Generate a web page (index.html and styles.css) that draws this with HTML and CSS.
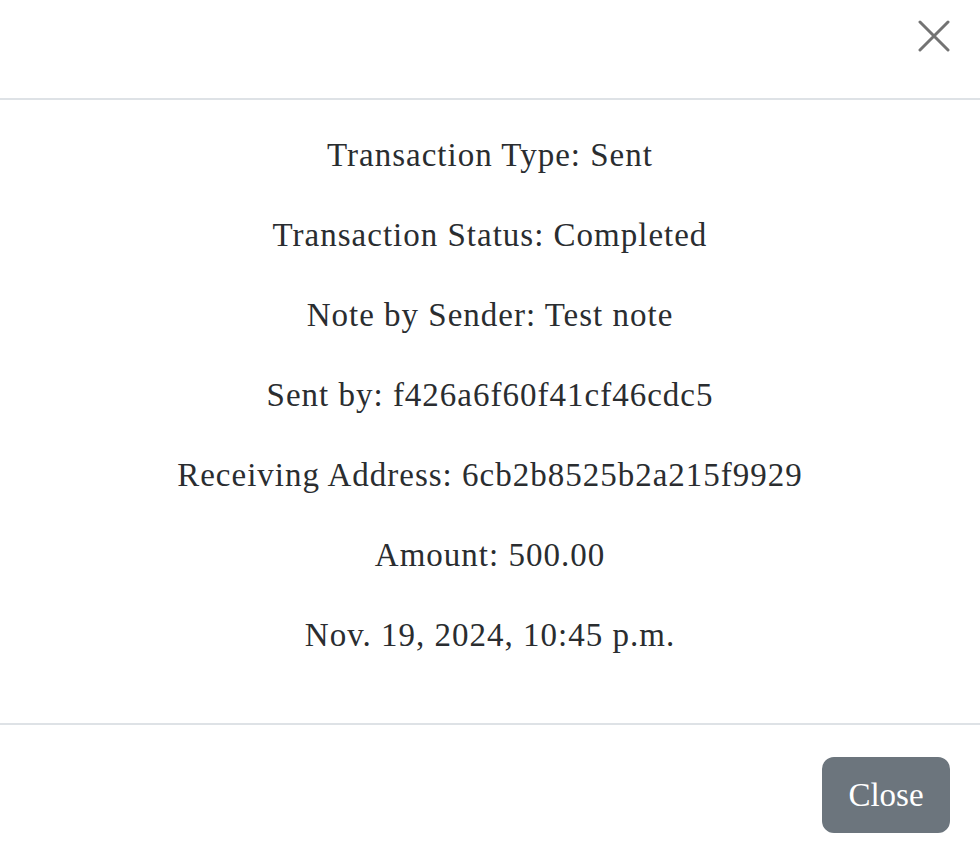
FILE: index.html
```html
<!DOCTYPE html>
<html lang="en">
<head>
<meta charset="utf-8">
<title>Transaction</title>
<link rel="stylesheet" href="styles.css">
</head>
<body>
<div class="modal">
  <div class="modal-header">
    <button class="btn-close" aria-label="Close">
      <svg width="32" height="32" viewBox="0 0 32 32"><path d="M2 2 L30 30 M30 2 L2 30" stroke="#737373" stroke-width="3" stroke-linecap="round" fill="none"/></svg>
    </button>
  </div>
  <div class="modal-body">
    <p>Transaction Type: Sent</p>
    <p>Transaction Status: Completed</p>
    <p>Note by Sender: Test note</p>
    <p>Sent by: f426a6f60f41cf46cdc5</p>
    <p>Receiving Address: 6cb2b8525b2a215f9929</p>
    <p>Amount: 500.00</p>
    <p>Nov. 19, 2024, 10:45 p.m.</p>
  </div>
  <div class="modal-footer">
    <button class="btn-secondary">Close</button>
  </div>
</div>
</body>
</html>
```
FILE: styles.css
```css
html, body {
  margin: 0;
  padding: 0;
  background: #fff;
}
body {
  font-family: "Liberation Serif", "Times New Roman", serif;
  color: #2a2d30;
  font-size: 33px;
  line-height: 48px;
}
.modal {
  width: 980px;
  height: 856px;
  display: flex;
  flex-direction: column;
}
.modal-header {
  border-bottom: 2px solid #dee2e6;
  display: flex;
  justify-content: flex-end;
  align-items: flex-start;
  box-sizing: border-box;
  height: 100px;
}
.btn-close {
  margin: 20px 30px 0 0;
  padding: 0;
  border: 0;
  background: transparent;
  width: 32px;
  height: 32px;
  display: flex;
}
.modal-body {
  padding: 31px 32px 32px;
  text-align: center;
  border-bottom: 2px solid #dee2e6;
  letter-spacing: 1px;
}
.modal-body p {
  margin: 0 0 32px;
}
.modal-footer {
  display: flex;
  justify-content: flex-end;
  padding: 32px 30px 0;
}
.btn-secondary {
  font-family: inherit;
  font-size: 33px;
  line-height: 48px;
  color: #fff;
  background: #6c757d;
  border: 2px solid #6c757d;
  border-radius: 12px;
  padding: 12px 24px;
  width: 128px;
  height: 76px;
}
```
